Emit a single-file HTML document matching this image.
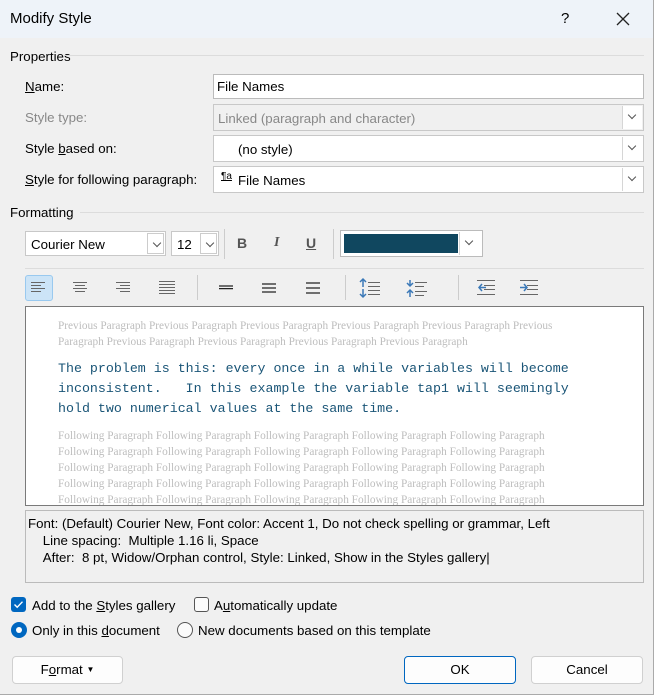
<!DOCTYPE html>
<html><head><meta charset="utf-8"><style>
*{box-sizing:border-box;margin:0;padding:0}
body{width:654px;height:695px;background:#f0f0f0;font-family:"Liberation Sans",sans-serif;font-size:13.3px;color:#000;position:relative;overflow:hidden}
.a{position:absolute}
.title{left:0;top:0;width:654px;height:38px;background:#eef3f9}
.box{position:absolute;background:#fff;border:1px solid #c8c8c8}
.dd{position:absolute;right:1px;top:1px;bottom:1px;width:20px;border-left:1px solid #d6d6d6;background:#fff}
.dd:after{content:"";position:absolute;left:6px;top:6px;width:5px;height:5px;border-right:1px solid #555;border-bottom:1px solid #555;transform:rotate(45deg)}
.lbl{position:absolute;line-height:14px;white-space:nowrap}
.hr{position:absolute;height:1px;background:#dcdcdc}
.ser{font-family:"Liberation Serif",serif;font-size:11.3px;color:#bdbdbd;white-space:nowrap;line-height:16px}
.mono{font-family:"Liberation Mono",monospace;font-size:13.3px;color:#1a5577;line-height:20px;white-space:pre}
.btn{position:absolute;background:#fdfdfd;border:1px solid #d0d0d0;border-radius:4px;text-align:center;line-height:26px;font-size:13.3px}
</style></head><body>
<div class="a title"></div>
<div class="lbl" style="left:10px;top:12px;font-size:15px">Modify Style</div>
<div class="lbl" style="left:561px;top:12px;font-size:15px">?</div>
<svg class="a" style="left:616px;top:12px" width="14" height="14"><path d="M1 1L13 13M13 1L1 13" stroke="#222" stroke-width="1.3"/></svg>

<div class="lbl" style="left:10px;top:50px">Properties</div>
<div class="hr" style="left:64px;top:55px;width:580px"></div>

<div class="lbl" style="left:25px;top:80px"><u>N</u>ame:</div>
<div class="box" style="left:213px;top:74px;width:431px;height:25px;border-color:#bbb"><span class="a" style="left:3px;top:4px">File Names</span></div>

<div class="lbl" style="left:25px;top:111px;color:#888">Style type:</div>
<div class="box" style="left:213px;top:104px;width:431px;height:27px;background:#f0f0f0;color:#888"><span class="a" style="left:4px;top:6px">Linked (paragraph and character)</span><div class="dd"></div></div>

<div class="lbl" style="left:25px;top:142px">Style <u>b</u>ased on:</div>
<div class="box" style="left:213px;top:135px;width:431px;height:27px"><span class="a" style="left:24px;top:6px">(no style)</span><div class="dd"></div></div>

<div class="lbl" style="left:25px;top:173px"><u>S</u>tyle for following paragraph:</div>
<div class="box" style="left:213px;top:166px;width:431px;height:27px"><span class="a" style="left:7px;top:4px;font-size:10px;text-decoration:underline">¶a</span><span class="a" style="left:24px;top:6px">File Names</span><div class="dd"></div></div>

<div class="lbl" style="left:10px;top:206px">Formatting</div>
<div class="hr" style="left:80px;top:212px;width:564px"></div>

<div class="box" style="left:25px;top:231px;width:141px;height:25px"><span class="a" style="left:5px;top:5px">Courier New</span><div class="dd" style="width:17px;border:1px solid #ccc"></div></div>
<div class="box" style="left:171px;top:231px;width:48px;height:25px"><span class="a" style="left:5px;top:5px">12</span><div class="dd" style="width:17px;border:1px solid #ccc"></div></div>
<div class="hr" style="left:224px;top:229px;width:1px;height:30px;background:#ccc"></div>
<div class="lbl" style="left:237px;top:236px;font-weight:bold;color:#555;font-size:14px">B</div>
<div class="lbl" style="left:274px;top:236px;font-style:italic;font-weight:bold;color:#555;font-size:14px;font-family:'Liberation Serif',serif">I</div>
<div class="lbl" style="left:306px;top:236px;font-weight:bold;color:#555;font-size:14px;text-decoration:underline">U</div>
<div class="hr" style="left:333px;top:229px;width:1px;height:30px;background:#ccc"></div>
<div class="box" style="left:340px;top:230px;width:143px;height:27px;border-color:#bbb"><div class="a" style="left:3px;top:3px;width:114px;height:19px;background:#10475f"></div><div class="dd" style="width:22px"></div></div>

<div class="hr" style="left:25px;top:268px;width:619px"></div>

<div class="a" style="left:25px;top:275px;width:28px;height:26px;background:#cce4f7;border:1px solid #99c9ef;border-radius:3px"></div>
<svg class="a" style="left:0;top:270px" width="654" height="35">
<g stroke="#666" stroke-width="1">
<path d="M31 12.5h14M31 15.5h10M31 18.5h14M31 21.5h10"/>
<path d="M73 12.5h14M75 15.5h10M73 18.5h14M75 21.5h10"/>
<path d="M116 12.5h14M120 15.5h10M116 18.5h14M120 21.5h10"/>
<path d="M159 11.5h16M159 14.5h16M159 17.5h16M159 20.5h16M159 23.5h16"/>
</g>
<path d="M197.5 5v25M345.5 5v25M458.5 5v25" stroke="#ccc"/>
<g stroke="#222" stroke-width="1.2">
<path d="M219 16h14M219 18.6h14"/>
<path d="M262 14h14M262 18h14M262 22h14"/>
<path d="M306 13h14M306 18h14M306 23h14"/>
</g>
<g stroke="#666"><path d="M368 12.5h12M368 16.5h12M368 20.5h12M368 24.5h12M415 12.5h12M415 16.5h9M415 21.5h12M415 25.5h9"/>
<path d="M477 10.5h18M484 15.5h11M484 19.5h11M477 24.5h18M520 10.5h18M527 15.5h11M527 19.5h11M520 24.5h18"/></g>
<g fill="#3a78b7" stroke="#3a78b7" stroke-width="1.5">
<path d="M363 10v7M363 19v7" /><path d="M360 12l3-3 3 3M360 24l3 3 3-3" fill="none"/>
<path d="M410 10v5M410 21v6" /><path d="M407 13l3 3 3-3M407 23l3-3 3 3" fill="none"/>
<path d="M479 17.5h7" /><path d="M482 14l-3 3.5 3 3.5" fill="none"/>
<path d="M520 17.5h7" /><path d="M524 14l3 3.5-3 3.5" fill="none"/>
</g>
</svg>

<div class="a" style="left:25px;top:306px;width:619px;height:200px;background:#fff;border:1px solid #7a7a7a;overflow:hidden">
<div class="a ser" style="left:32px;top:11px">Previous Paragraph Previous Paragraph Previous Paragraph Previous Paragraph Previous Paragraph Previous<br>Paragraph Previous Paragraph Previous Paragraph Previous Paragraph Previous Paragraph</div>
<div class="a mono" style="left:32px;top:52px">The problem is this: every once in a while variables will become
inconsistent.   In this example the variable tap1 will seemingly
hold two numerical values at the same time.</div>
<div class="a ser" style="left:32px;top:121px">Following Paragraph Following Paragraph Following Paragraph Following Paragraph Following Paragraph<br>Following Paragraph Following Paragraph Following Paragraph Following Paragraph Following Paragraph<br>Following Paragraph Following Paragraph Following Paragraph Following Paragraph Following Paragraph<br>Following Paragraph Following Paragraph Following Paragraph Following Paragraph Following Paragraph<br>Following Paragraph Following Paragraph Following Paragraph Following Paragraph Following Paragraph</div>
</div>

<div class="a" style="left:25px;top:510px;width:619px;height:73px;background:#f0f0f0;border:1px solid #bbb">
<div class="a" style="left:2px;top:4px;line-height:17px;font-size:13.3px;white-space:nowrap">Font: (Default) Courier New, Font color: Accent 1, Do not check spelling or grammar, Left<br>&nbsp;&nbsp;&nbsp;&nbsp;Line spacing:&nbsp; Multiple 1.16 li, Space<br>&nbsp;&nbsp;&nbsp;&nbsp;After:&nbsp; 8 pt, Widow/Orphan control, Style: Linked, Show in the Styles gallery|</div>
</div>

<div class="a" style="left:11px;top:597px;width:15px;height:15px;background:#0067c0;border-radius:3px"></div>
<svg class="a" style="left:11px;top:597px" width="15" height="15"><path d="M3.5 7.5l2.7 2.7 5.3-5.5" stroke="#fff" stroke-width="1.4" fill="none"/></svg>
<div class="lbl" style="left:32px;top:599px">Add to the <u>S</u>tyles gallery</div>
<div class="a" style="left:194px;top:597px;width:15px;height:15px;border:1px solid #555;border-radius:3px;background:#fbfbfb"></div>
<div class="lbl" style="left:214px;top:599px">A<u>u</u>tomatically update</div>

<div class="a" style="left:11px;top:622px;width:16px;height:16px;border-radius:50%;background:#0067c0"></div>
<div class="a" style="left:16px;top:627px;width:6px;height:6px;border-radius:50%;background:#fff"></div>
<div class="lbl" style="left:32px;top:624px">Only in this <u>d</u>ocument</div>
<div class="a" style="left:177px;top:622px;width:16px;height:16px;border-radius:50%;border:1px solid #555;background:#fbfbfb"></div>
<div class="lbl" style="left:198px;top:624px">New documents based on this template</div>

<div class="btn" style="left:12px;top:656px;width:111px;height:28px">F<u>o</u>rmat <span style="font-size:8px;position:relative;top:-2px">▼</span></div>
<div class="btn" style="left:404px;top:656px;width:112px;height:28px;border-color:#0067c0">OK</div>
<div class="btn" style="left:531px;top:656px;width:112px;height:28px">Cancel</div>
<div class="a" style="left:653px;top:0;width:1px;height:695px;background:#aaa"></div>
<div class="a" style="left:0;top:694px;width:654px;height:1px;background:#aaa"></div>
</body></html>
